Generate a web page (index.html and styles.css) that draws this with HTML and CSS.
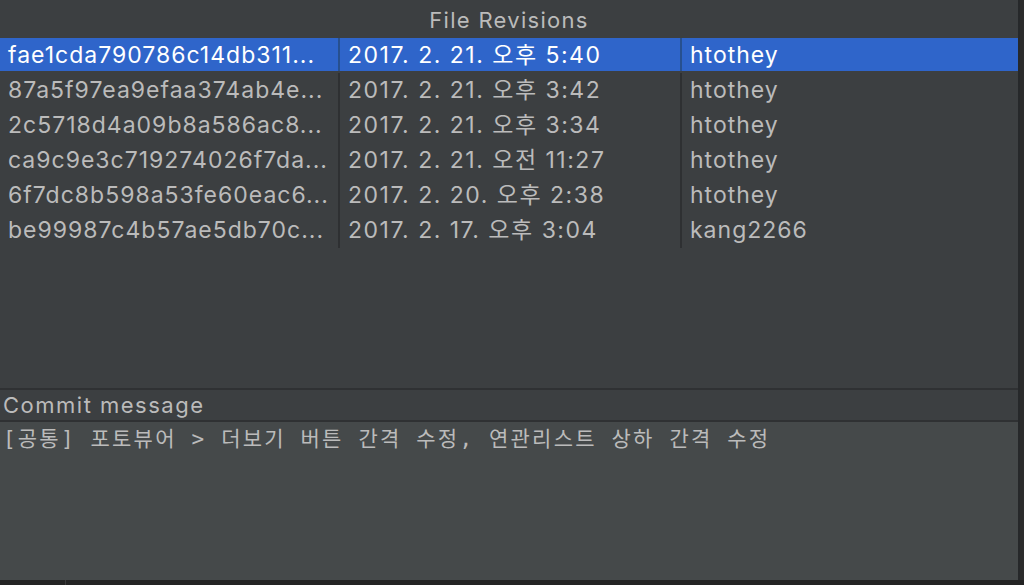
FILE: index.html
```html
<!DOCTYPE html>
<html lang="ko">
  <head>
    <meta charset="UTF-8" />
    <meta name="viewport" content="width=device-width, initial-scale=1.0" />
    <title>File Revisions</title>
    <link rel="stylesheet" href="styles.css">
  </head>
  <body>
    <div class="window">
      <div class="main">
        <div class="title">File Revisions</div>

        <div class="revisions">
          <div class="row selected">
            <div class="cell">fae1cda790786c14db311...</div>
            <div class="cell date">2017. 2. 21. 오후 5:40</div>
            <div class="cell">htothey</div>
          </div>
          <div class="row">
            <div class="cell">87a5f97ea9efaa374ab4e...</div>
            <div class="cell date">2017. 2. 21. 오후 3:42</div>
            <div class="cell">htothey</div>
          </div>
          <div class="row">
            <div class="cell">2c5718d4a09b8a586ac8...</div>
            <div class="cell date">2017. 2. 21. 오후 3:34</div>
            <div class="cell">htothey</div>
          </div>
          <div class="row">
            <div class="cell">ca9c9e3c719274026f7da...</div>
            <div class="cell date">2017. 2. 21. 오전 11:27</div>
            <div class="cell">htothey</div>
          </div>
          <div class="row">
            <div class="cell">6f7dc8b598a53fe60eac6...</div>
            <div class="cell date">2017. 2. 20. 오후 2:38</div>
            <div class="cell">htothey</div>
          </div>
          <div class="row">
            <div class="cell">be99987c4b57ae5db70c...</div>
            <div class="cell date">2017. 2. 17. 오후 3:04</div>
            <div class="cell">kang2266</div>
          </div>
        </div>

        <div class="commit">
          <div class="commit-header">Commit message</div>
          <div class="commit-body">[공통] 포토뷰어 &gt; 더보기 버튼 간격 수정, 연관리스트 상하 간격 수정</div>
        </div>
      </div>
      <div class="scrollbar"></div>
    </div>
    <div class="statusbar">
      <div class="status-left"></div>
    </div>
  </body>
</html>
```

FILE: styles.css
```css
* {
  margin: 0;
  box-sizing: border-box;
}
html {
  background-color: #3c3f41;
}
body {
  font-family: Inter, "Noto Sans CJK KR", sans-serif;
  color: #bbbbbb;
  height: 585px;
  display: flex;
  flex-direction: column;
  overflow: hidden;
}

.window {
  flex: 1;
  display: flex;
  min-height: 0;
}
.main {
  flex: 1;
  display: flex;
  flex-direction: column;
}
.scrollbar {
  width: 6px;
  background-color: #2b2b2b;
  border-left: 2px solid #26282a;
}

.title {
  height: 38px;
  padding-top: 2px;
  line-height: 36px;
  text-align: center;
  font-size: 22px;
  letter-spacing: 1.3px;
}

.revisions {
  flex: 1;
}
.row {
  display: grid;
  grid-template-columns: 340px 342px 1fr;
  height: 35px;
  font-size: 23px;
  letter-spacing: 1px;
}
.cell {
  padding: 0 0 0 8px;
  border-right: 2px solid #2e3032;
  height: 35px;
  line-height: 34px;
  white-space: nowrap;
}
.cell.date {
  letter-spacing: 1.5px;
}
.cell:last-child {
  border-right: none;
}
.selected .cell {
  background-color: #2f65ca;
  color: #ffffff;
  height: 33px;
}
.selected .cell:first-child,
.selected .cell:nth-child(2) {
  border-right-color: #27508f;
}

.commit {
  height: 192px;
  display: flex;
  flex-direction: column;
}
.commit-header {
  height: 34px;
  line-height: 30px;
  border-top: 2px solid #2f3133;
  border-bottom: 2px solid #2f3133;
  font-size: 22px;
  letter-spacing: 1.5px;
  padding-left: 3px;
}
.commit-body {
  flex: 1;
  background-color: #45494a;
  font-family: "DejaVu Sans Mono", "Noto Sans CJK KR", monospace;
  font-size: 21px;
  letter-spacing: 2.2px;
  line-height: 30px;
  padding: 2px 0 0 3px;
  color: #bbbbbb;
}

.statusbar {
  height: 5px;
  background-color: #232323;
  display: flex;
}
.status-left {
  width: 66px;
  border-right: 1px solid #3a3a3a;
}
```
